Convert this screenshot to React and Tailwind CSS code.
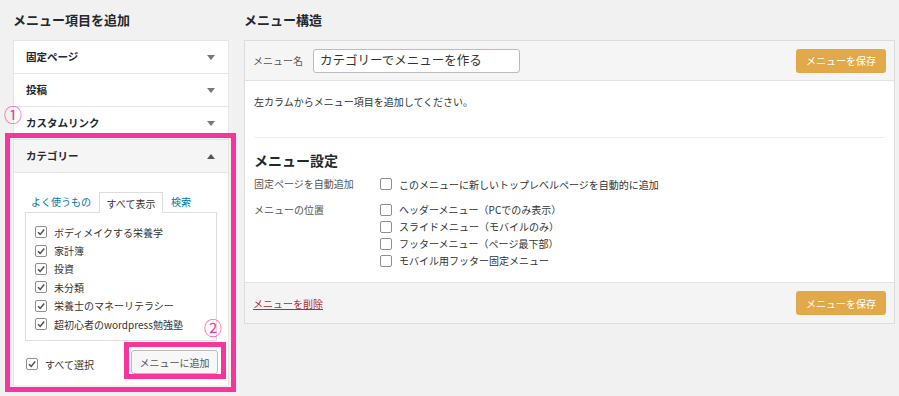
import React from "react";

const font = { fontFamily: '"Noto Sans CJK JP", "Noto Sans", sans-serif' };

const Check = ({ checked }) => (
  <span className="w-[12px] h-[12px] shrink-0 rounded-[2px] border border-[#8c8f94] bg-white flex items-center justify-center">
    {checked && (
      <svg width="10" height="10" viewBox="0 0 10 10">
        <path d="M2 5.2 L4.2 7.4 L8.2 2.6" fill="none" stroke="#555" strokeWidth="1.6" />
      </svg>
    )}
  </span>
);

const Arrow = ({ up }) => (
  <svg width="8" height="5" viewBox="0 0 8 5" className="mr-[1px]">
    {up ? <path d="M0 5 L4 0 L8 5 Z" fill="#555" /> : <path d="M0 0 L8 0 L4 5 Z" fill="#777" />}
  </svg>
);

const AccordionRow = ({ label }) => (
  <div className="h-[33px] flex items-center justify-between px-[12px] border-b border-[#e5e5e5] bg-white">
    <span className="text-[10.5px] font-bold text-[#23282d]">{label}</span>
    <Arrow />
  </div>
);

const SaveButton = () => (
  <button className="w-[90px] h-[24px] rounded-[3px] bg-[#e2a94a] text-white text-[10px]">
    メニューを保存
  </button>
);

const categories = [
  "ボディメイクする栄養学",
  "家計簿",
  "投資",
  "未分類",
  "栄養士のマネーリテラシー",
  "超初心者のwordpress勉強塾",
];

const positions = [
  "ヘッダーメニュー（PCでのみ表示）",
  "スライドメニュー（モバイルのみ）",
  "フッターメニュー（ページ最下部）",
  "モバイル用フッター固定メニュー",
];

export default function App() {
  return (
    <div className="relative w-[899px] h-[396px] bg-[#f1f1f1] flex overflow-hidden text-[#333]" style={font}>
      {/* left column */}
      <div className="ml-[13px] w-[216px]">
        <h2 className="h-[40px] flex items-center text-[13px] font-bold text-[#23282d] pb-[1px]">メニュー項目を追加</h2>
        <div className="border border-[#e5e5e5] border-b-0 h-[345px] flex flex-col">
          <AccordionRow label="固定ページ" />
          <AccordionRow label="投稿" />
          <AccordionRow label="カスタムリンク" />
          <div className="h-[33px] flex items-center justify-between px-[12px] border-b border-[#e5e5e5] bg-[#f5f5f5]">
            <span className="text-[10.5px] font-bold text-[#23282d]">カテゴリー</span>
            <Arrow up />
          </div>
          <div className="flex-1 bg-white px-[11px] pt-[19px]">
            <div className="flex items-end h-[20px] text-[10px]">
              <span className="text-[#0073aa] pl-[6px] pr-[8px] pb-[3px]">よく使うもの</span>
              <span className="h-[21px] w-[64px] border border-[#ddd] border-b-0 bg-white flex items-center justify-center relative top-[1px] z-10">すべて表示</span>
              <span className="text-[#0073aa] px-[8px] pb-[3px]">検索</span>
            </div>
            <div className="h-[129px] border border-[#ddd] pt-[10px] pl-[9px] flex flex-col">
              {categories.map((c) => (
                <div key={c} className="h-[18.4px] flex items-center gap-[7px] text-[10px]">
                  <Check checked />
                  <span>{c}</span>
                </div>
              ))}
            </div>
            <div className="flex items-center justify-between mt-[9px]">
              <div className="flex items-center gap-[7px] text-[10px] pl-[1px] pt-[4px]">
                <Check checked />
                <span>すべて選択</span>
              </div>
              <button className="w-[87px] h-[24px] rounded-[3px] border border-[#bbb] bg-[#f7f7f7] text-[10px] text-[#555] mr-[-1px]">
                メニューに追加
              </button>
            </div>
          </div>
        </div>
      </div>

      {/* right column */}
      <div className="ml-[15px] w-[651px]">
        <h2 className="h-[40px] flex items-center text-[13px] font-bold text-[#23282d] pb-[1px]">メニュー構造</h2>
        <div className="border border-[#dcdcde] bg-white">
          <div className="h-[40px] bg-[#f5f5f5] border-b border-[#e2e2e2] flex items-center px-[8px] justify-between">
            <div className="flex items-center gap-[10px]">
              <span className="text-[10px] text-[#555]">メニュー名</span>
              <div className="w-[207px] h-[24px] border border-[#bbb] rounded-[3px] bg-white flex items-center px-[6px] text-[12.5px] text-[#333]">
                カテゴリーでメニューを作る
              </div>
            </div>
            <SaveButton />
          </div>
          <div className="h-[201px] px-[9px]">
            <p className="text-[10px] pt-[13px] h-[56px]">左カラムからメニュー項目を追加してください。</p>
            <div className="border-t border-[#eee]" />
            <h3 className="text-[14px] font-bold text-[#23282d] mt-[12px] leading-[20px]">メニュー設定</h3>
            <div className="flex text-[10px] mt-[2px]">
              <span className="w-[126px] text-[#555] leading-[24px]">固定ページを自動追加</span>
              <div className="flex items-center gap-[7px] h-[24px]">
                <Check />
                <span>このメニューに新しいトップレベルページを自動的に追加</span>
              </div>
            </div>
            <div className="flex text-[10px] mt-[5px]">
              <span className="w-[126px] text-[#555] leading-[17px]">メニューの位置</span>
              <div className="flex flex-col">
                {positions.map((o) => (
                  <div key={o} className="flex items-center gap-[7px] h-[17px]">
                    <Check />
                    <span>{o}</span>
                  </div>
                ))}
              </div>
            </div>
          </div>
          <div className="h-[41px] bg-[#f4f4f4] border-t border-[#e2e2e2] flex items-center justify-between px-[8px]">
            <a className="text-[10px] text-[#b32d2e] underline">メニューを削除</a>
            <SaveButton />
          </div>
        </div>
      </div>

      {/* annotations */}
      <div className="absolute left-[5px] top-[133px] w-[231px] h-[259px] border-[5px] border-[#f7359a]" />
      <div className="absolute left-[124px] top-[342px] w-[102px] h-[37px] border-[5px] border-[#f7359a]" />
      <span className="absolute left-[4px] top-[103px] text-[18px] leading-[22px] text-[#f7359a]">①</span>
      <span className="absolute left-[204px] top-[316px] text-[18px] leading-[22px] text-[#f7359a]">②</span>
    </div>
  );
}
